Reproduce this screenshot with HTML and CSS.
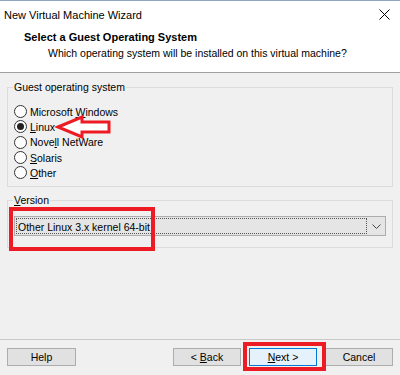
FILE: index.html
```html
<!DOCTYPE html>
<html lang="en">
<head>
  <meta charset="UTF-8" />
  <title>New Virtual Machine Wizard</title>
  <link rel="stylesheet" href="styles.css">
</head>
<body>
  <div class="window">
    <div class="top">
      <div class="titlebar">
        <span class="title">New Virtual Machine Wizard</span>
        <svg class="close" width="11" height="11" viewBox="0 0 11 11"><path d="M0.5 0.5L10.5 10.5M10.5 0.5L0.5 10.5" stroke="#000" stroke-width="1" fill="none"/></svg>
      </div>
      <div class="heading">Select a Guest Operating System</div>
      <div class="subheading">Which operating system will be installed on this virtual machine?</div>
    </div>

    <div class="content">
      <fieldset class="group os-group">
        <legend>Guest operating system</legend>
        <div class="radio"><span class="dot"></span><span>Microsoft <u>W</u>indows</span></div>
        <div class="radio"><span class="dot checked"></span><span><u>L</u>inux</span></div>
        <div class="radio"><span class="dot"></span><span>Nove<u>l</u>l NetWare</span></div>
        <div class="radio"><span class="dot"></span><span><u>S</u>olaris</span></div>
        <div class="radio"><span class="dot"></span><span><u>O</u>ther</span></div>
      </fieldset>

      <fieldset class="group version-group">
        <legend><u>V</u>ersion</legend>
        <div class="combo">
          <span class="combo-value">Other Linux 3.x kernel 64-bit</span>
          <svg class="chevron" width="9" height="5" viewBox="0 0 9 5"><path d="M0.5 0.5L4.5 4.5L8.5 0.5" stroke="#444" stroke-width="1" fill="none"/></svg>
        </div>
      </fieldset>
    </div>

    <div class="footer">
      <button class="btn help">Help</button>
      <div class="spacer"></div>
      <button class="btn">&lt; <u>B</u>ack</button>
      <button class="btn primary"><u>N</u>ext &gt;</button>
      <button class="btn">Cancel</button>
    </div>

    <!-- annotations drawn over the dialog -->
    <svg class="arrow" width="58" height="26" viewBox="0 0 58 26"><path d="M4 13L28 3L28 8L55 8L55 18L28 18L28 23Z" fill="#fff" stroke="#ed1c24" stroke-width="3" stroke-linejoin="miter"/></svg>
    <div class="mark mark-version"></div>
    <div class="mark mark-next"></div>
  </div>
</body>
</html>
```

FILE: styles.css
```css
body { margin: 0; font-family: "Liberation Sans", Arial, sans-serif; font-size: 10.5px; color: #000; }
.window { position: relative; width: 400px; height: 375px; background: #f0f0f0; display: flex; flex-direction: column; overflow: hidden; }

.top { background: #fff; height: 73px; border-top: 1px solid #8fa6bf; border-bottom: 1px solid #a0a0a0; box-sizing: border-box; }
.titlebar { height: 27px; display: flex; align-items: center; justify-content: space-between; padding: 0 10px 0 4px; }
.title { font-size: 11px; }
.heading { font-weight: bold; font-size: 11px; line-height: 15px; padding-left: 24px; margin-top: 2px; }
.subheading { line-height: 15px; padding-left: 48px; margin-top: 1px; }

.content { flex: 1; }
.group { margin: 0 7px; border: 1px solid #dcdcdc; padding: 0 5px; min-width: 0; }
.group legend { padding: 0 1px; line-height: 15px; }
.os-group { margin-top: 7px; padding-top: 9px; padding-bottom: 6px; }
.version-group { margin-top: 6px; padding-top: 8px; padding-bottom: 11px; }

.radio { display: flex; align-items: center; height: 15.3px; }
.dot { width: 11px; height: 11px; border: 1px solid #333; border-radius: 50%; background: #fff; margin: 0 3px 0 1px; display: flex; align-items: center; justify-content: center; flex: none; }
.dot.checked::after { content: ""; width: 7px; height: 7px; border-radius: 50%; background: #222; }

.combo { margin: 0 1px; height: 20px; box-sizing: border-box; border: 1px solid #adadad; background: #e5e5e5; display: flex; align-items: center; padding: 0 4px 0 1px; }
.combo-value { flex: 1; height: 16px; line-height: 16px; border: 1px dotted #555; box-sizing: border-box; padding-left: 1px; margin-right: 5px; }

.footer { height: 36px; border-top: 1px solid #c8c8c8; box-sizing: border-box; display: flex; align-items: flex-start; gap: 8px; padding: 8px 7px 0; }
.spacer { flex: 1; }
.btn { width: 68px; height: 18px; padding: 0; font: inherit; background: #e1e1e1; border: 1px solid #adadad; color: #000; }
.btn.help { width: 69px; }
.btn.primary { background: #e5f1fb; border-color: #0078d7; }

.arrow { position: absolute; left: 54px; top: 114px; }
.mark { position: absolute; border: 4px solid #ed1c24; box-sizing: border-box; }
.mark-version { left: 9px; top: 207px; width: 146px; height: 44px; }
.mark-next { left: 243px; top: 342px; width: 83px; height: 29px; }
```
